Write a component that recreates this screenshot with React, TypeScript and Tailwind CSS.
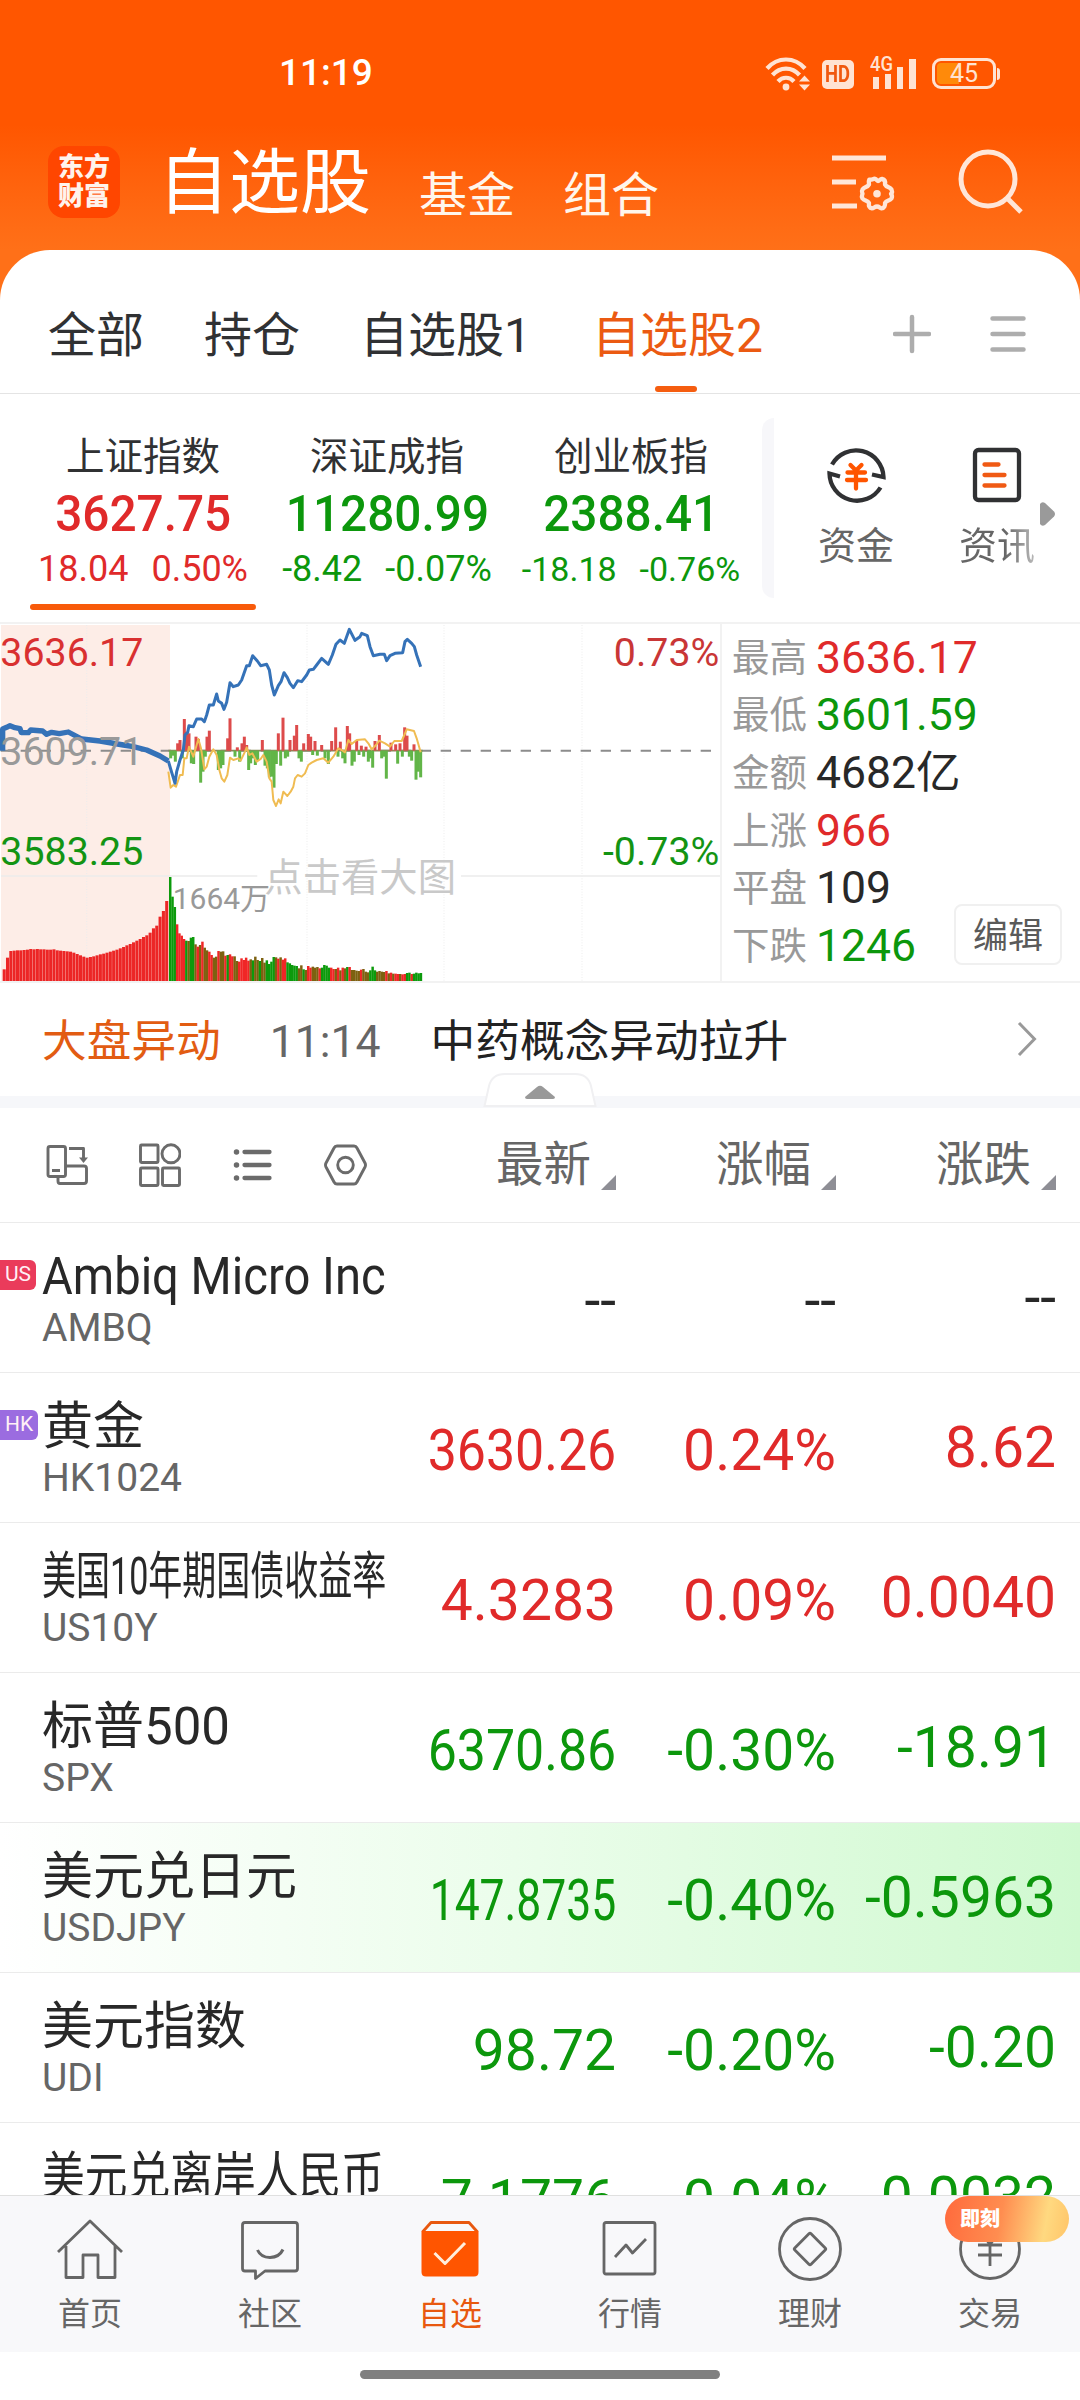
import type { ReactNode } from "react";

interface IndexItem {
  name: string;
  value: string;
  change: string;
  percent: string;
  tone: string;
  size: string;
  active?: boolean;
}

interface Quote {
  name: string;
  code?: string;
  last: string;
  percent: string;
  change: string;
  tone: string;
  market?: string;
  marketBg?: string;
  nameFit?: string;
  lastFit?: string;
  rowBg?: string;
}

const RED = "text-[#e02a2a]";
const GREEN = "text-[#0c970c]";
const INK = "text-[#282828]";

const INDEXES: IndexItem[] = [
  { name: "上证指数", value: "3627.75", change: "18.04", percent: "0.50%", tone: RED, size: "text-[36px] gap-[23px]", active: true },
  { name: "深证成指", value: "11280.99", change: "-8.42", percent: "-0.07%", tone: GREEN, size: "text-[36px] gap-[23px]" },
  { name: "创业板指", value: "2388.41", change: "-18.18", percent: "-0.76%", tone: GREEN, size: "text-[34px] gap-[23px]" },
];

const STATS = [
  { label: "最高", value: "3636.17", tone: RED },
  { label: "最低", value: "3601.59", tone: GREEN },
  { label: "金额", value: "4682亿", tone: INK },
  { label: "上涨", value: "966", tone: RED },
  { label: "平盘", value: "109", tone: INK },
  { label: "下跌", value: "1246", tone: GREEN },
];

const QUOTES: Quote[] = [
  { name: "Ambiq Micro Inc", code: "AMBQ", last: "--", percent: "--", change: "--", tone: INK, market: "US", marketBg: "w-[36px] bg-[#ea3b5b]", nameFit: "scale-x-[0.925]" },
  { name: "黄金", code: "HK1024", last: "3630.26", percent: "0.24%", change: "8.62", tone: RED, market: "HK", marketBg: "w-[38px] bg-[#9b6ce0]", lastFit: "scale-x-[0.91]" },
  { name: "美国10年期国债收益率", code: "US10Y", last: "4.3283", percent: "0.09%", change: "0.0040", tone: RED, nameFit: "scale-x-[0.667]" },
  { name: "标普500", code: "SPX", last: "6370.86", percent: "-0.30%", change: "-18.91", tone: GREEN, lastFit: "scale-x-[0.91]" },
  { name: "美元兑日元", code: "USDJPY", last: "147.8735", percent: "-0.40%", change: "-0.5963", tone: GREEN, lastFit: "scale-x-[0.78]", rowBg: "bg-linear-to-r from-white via-[#eafdea] to-[#d0f9d0]" },
  { name: "美元指数", code: "UDI", last: "98.72", percent: "-0.20%", change: "-0.20", tone: GREEN },
  { name: "美元兑离岸人民币", last: "7.1776", percent: "0.04%", change: "0.0032", tone: GREEN, nameFit: "scale-x-[0.838]" },
];

// Chart data, in viewBox units (three per pixel).
const PRE_LINE =
  "8,407 8,342 20,337 30,332 45,338 60,341 64,353 85,353 92,345 128,348 140,358 155,352 178,356 205,351 222,360 245,372 300,378 335,384 370,390 400,395 440,405 480,423 505,438";
const PRICE_LINE =
  "505,438 512,462 518,482 525,505 530,470 540,435 550,405 555,360 563,352 567,332 580,335 590,312 605,312 613,320 620,300 628,270 640,270 650,237 655,258 665,265 672,283 680,262 690,203 700,215 715,210 725,195 740,152 748,152 758,122 772,138 782,152 800,148 808,165 815,210 823,240 835,212 843,200 852,173 862,188 870,205 880,218 893,197 905,200 920,180 928,165 940,163 950,150 965,130 985,148 997,120 1008,88 1020,75 1033,85 1048,43 1065,76 1080,65 1085,55 1102,62 1110,95 1120,122 1140,118 1153,118 1160,137 1170,122 1185,115 1208,113 1215,80 1222,73 1235,85 1243,95 1250,120 1262,155";
const FLOW_LINE =
  "505,470 512,518 520,510 528,515 540,480 548,480 553,430 560,430 567,395 580,425 595,372 603,400 613,463 620,455 628,425 640,403 650,420 658,465 665,490 673,500 682,480 690,428 700,435 715,430 722,437 735,410 740,397 748,420 757,415 770,440 782,432 790,420 800,440 808,490 815,500 820,555 828,573 836,553 842,565 850,530 862,543 872,530 880,515 885,490 893,480 905,485 915,475 925,450 935,443 950,435 970,430 985,443 1000,425 1015,400 1025,405 1035,412 1045,375 1055,387 1070,375 1095,373 1105,385 1115,403 1128,390 1138,377 1155,385 1170,395 1183,378 1205,378 1213,360 1220,343 1242,348 1250,370 1262,412";

const FLOW_BARS = [
  [512, 430], [519, 422], [526, 440], [533, 385], [540, 375], [547, 430], [553, 312], [560, 350], [567, 355], [574, 445],
  [581, 447], [588, 365], [595, 372], [602, 503], [609, 470], [616, 425], [621, 365], [628, 347], [655, 465], [662, 460],
  [669, 450], [683, 370], [690, 310], [705, 425], [712, 397], [719, 440], [726, 385], [733, 365], [740, 390], [746, 465],
  [752, 445], [759, 430], [766, 450], [773, 435], [787, 375], [795, 452], [802, 460], [808, 487], [815, 485], [822, 518],
  [829, 447], [835, 355], [842, 452], [849, 308], [856, 430], [863, 425], [870, 375], [883, 362], [890, 330], [897, 430],
  [904, 440], [911, 385], [925, 357], [932, 365], [938, 420], [945, 378], [952, 422], [965, 390], [975, 430], [985, 447],
  [995, 378], [1007, 337], [1014, 425], [1021, 380], [1028, 430], [1035, 445], [1042, 333], [1049, 355], [1056, 452],
  [1063, 440], [1070, 375], [1077, 420], [1084, 392], [1091, 425], [1098, 395], [1105, 440], [1111, 430], [1118, 458],
  [1125, 378], [1138, 360], [1145, 430], [1152, 425], [1159, 491], [1173, 383], [1187, 388], [1193, 446], [1200, 385],
  [1207, 425], [1214, 337], [1221, 362], [1228, 425], [1235, 437], [1242, 388], [1248, 494], [1255, 470], [1262, 487],
];

const AUCTION_TOPS = [
  1063, 1028, 1008, 1007, 1006, 1006, 1005, 1004, 1002, 1003, 1002, 1003, 1003, 1004, 1004, 1003, 1006, 1007, 1008, 1009,
  1010, 1013, 1017, 1021, 1025, 1028, 1026, 1024, 1021, 1018, 1016, 1013, 1010, 1007, 1004, 1000, 996, 991, 987, 982, 977,
  972, 966, 961, 953, 940, 932, 905, 888, 858,
];

const VOLUME_TOPS = [
  786, 845, 876, 928, 955, 962, 972, 977, 978, 968, 966, 988, 995, 990, 980, 998, 1006, 1010, 1020, 1028, 1025, 1008, 1010,
  1009, 1022, 1020, 1018, 1024, 1024, 1038, 1040, 1030, 1035, 1028, 1037, 1033, 1036, 1025, 1035, 1038, 1029, 1043, 1036,
  1047, 1040, 1026, 1027, 1031, 1027, 1034, 1030, 1042, 1045, 1050, 1052, 1053, 1060, 1051, 1063, 1065, 1053, 1058, 1055,
  1058, 1056, 1060, 1058, 1050, 1052, 1058, 1058, 1062, 1062, 1058, 1066, 1058, 1060, 1056, 1056, 1065, 1065, 1067, 1068,
  1064, 1062, 1070, 1072, 1066, 1055, 1066, 1070, 1068, 1070, 1071, 1068, 1075, 1073, 1076, 1076, 1077, 1077, 1078, 1077,
  1074, 1073, 1077, 1076, 1073, 1075, 1074,
];
const VOLUME_TONES =
  "gggrrrrgmggmrmrmmrrmmrmmrgrrmmrrrrrmgmmgmmggggmrmrrgggggmmgmrrmmmrggggrrmrmrmgrmmmmrmmmgggmmmmrmrmrrmrrggrggg";
const TONE_FILL: Record<string, string> = { g: "#0c9a0c", r: "#f02626", m: "#7d6110" };

const BOTTOM = 1098;

function MinuteChart() {
  return (
    <svg width="720" height="357" viewBox="0 27 2160 1071" className="block shrink-0">
      <rect x="3" y="30" width="507" height="1068" fill="#fdede7" />
      {[260, 921, 1332, 1746].map((x) => (
        <line key={x} x1={x} x2={x} y1="30" y2={BOTTOM} stroke="#ededed" strokeWidth="3" strokeDasharray="3 5" />
      ))}
      <path d="M3 783H772M1383 783H2160" stroke="#ececec" strokeWidth="5" />
      <path d="M2 407H2134" stroke="#8c8c8c" strokeWidth="6" strokeDasharray="31 29" />
      {AUCTION_TOPS.map((top, i) => (
        <rect key={i} x={8 + i * 9.95} y={top} width="9.2" height={BOTTOM - top} fill="#ec2626" />
      ))}
      {VOLUME_TOPS.map((top, i) => (
        <rect key={i} x={507 + i * 6.9} y={top} width="7.4" height={BOTTOM - top} fill={TONE_FILL[VOLUME_TONES[i] ?? "g"]} />
      ))}
      <path d="M505 407H1268" stroke="#8a8a5a" strokeWidth="5" />
      {FLOW_BARS.map(([x, y]) => (
        <rect key={x} x={x - 4.5} y={Math.min(y, 407)} width="9" height={Math.abs(y - 407)} fill={y < 407 ? "#dd4b4b" : "#62b548"} />
      ))}
      <polyline points={FLOW_LINE} fill="none" stroke="#f0bc52" strokeWidth="6" strokeLinejoin="round" />
      <polyline points={PRE_LINE} fill="none" stroke="#3572b8" strokeWidth="16" strokeLinejoin="round" />
      <polyline points={PRICE_LINE} fill="none" stroke="#3572b8" strokeWidth="9" strokeLinejoin="round" />
      <g fontSize="118">
        <text x="1" y="153" fill="#d93030">3636.17</text>
        <text x="1" y="449" fill="#999999">3609.71</text>
        <text x="1" y="749" fill="#139413">3583.25</text>
        <text x="2158" y="153" fill="#c93636" textAnchor="end">0.73%</text>
        <text x="2158" y="749" fill="#139413" textAnchor="end">-0.73%</text>
      </g>
      <text x="518" y="882" fontSize="90" fill="#999999">1664万</text>
      <text x="793" y="827" fontSize="115" fill="#c9c9c9">点击看大图</text>
    </svg>
  );
}

function StatusIcons() {
  return (
    <div className="flex items-end text-[#ffe3d3]">
      <svg width="46" height="36" viewBox="0 0 46 36" fill="none" stroke="currentColor" strokeWidth="4.2">
        <path d="M2 13.5C12.500 1.500 29.500 1.500 40 13.500" />
        <path d="M7.500 20C15 11.500 27 11.500 34.500 20" />
        <path d="M13 26.500C17.500 21.500 24.500 21.500 29 26.500" />
        <circle cx="21" cy="32" r="3.4" fill="currentColor" stroke="none" />
        <path d="M34 26.500l5.500-6 5.500 6zM34 29.500l5.500 6 5.500-6z" fill="currentColor" stroke="none" />
      </svg>
      <div className="ml-[11px] mb-[2px] flex h-[29px] w-[32px] items-center justify-center rounded-[5px] bg-[#ffe3d3] text-[23px] leading-none font-bold text-[#f0580f]">
        <span className="scale-x-[0.8]">HD</span>
      </div>
      <svg width="48" height="42" viewBox="0 -8 48 42" className="ml-[16px] mb-[2px]" fill="currentColor">
        <text x="0" y="15.500" fontSize="21" fontWeight="500" textLength="23" lengthAdjust="spacingAndGlyphs">4G</text>
        <path d="M3 22h6v12H3zM15 19h6v15h-6zM27 12h6v22h-6zM39 4h7v30h-7z" />
      </svg>
      <div className="ml-[14px] mb-[2px] flex items-center">
        <div className="flex h-[31px] w-[64px] items-center justify-center rounded-[9px] border-[3px] border-current bg-linear-to-r from-[#ff8a0a] from-[24px] to-transparent to-[24px] bg-clip-content p-[2px] text-[25px] leading-none">
          45
        </div>
        <div className="ml-px h-[12px] w-[3px] rounded-r bg-current" />
      </div>
    </div>
  );
}

function Header() {
  return (
    <header className="h-[250px] shrink-0 text-white">
      <div className="flex h-[130px] items-start justify-between pt-[53px] pr-[80px] pl-[279px]">
        <div className="text-[37px] leading-[40px] font-medium">11:19</div>
        <div className="-mt-[6px]">
          <StatusIcons />
        </div>
      </div>
      <div className="flex h-[104px] items-center pl-[48px]">
        <div className="flex size-[72px] flex-col items-center justify-center rounded-[16px] bg-[#ff4600] text-[26px] leading-[29px] font-black text-[#fff3ec]">
          <span>东方</span>
          <span>财富</span>
        </div>
        <h1 className="mt-[2px] ml-[38px] text-[71px] leading-[80px]">自选股</h1>
        <div className="mt-[27px] ml-[48px] flex gap-[48px] text-[48px] leading-[60px] text-[#fff6ec]">
          <span>基金</span>
          <span>组合</span>
        </div>
        <svg width="66" height="64" viewBox="0 0 66 64" className="ml-[172px]" fill="none" stroke="#ffe6d8" strokeWidth="5">
          <path d="M1 8H55M1 32H25M1 56H26" />
          <path
            d="M38.300 29.600C41.500 30 42 28.500 44 28.800C46 29.500 45.500 31 47 31C48.500 31 49 29 51 28.800C54 29.500 54.500 32 54 34.500C55.500 37.500 58.500 36.500 60.500 39.500C62 43 60 43.700 60 43.700C60 44.700 62 45 60.500 48.500C58.500 51 55.500 50 54 53C54.500 55.500 53 58.500 50.500 58.300C48.500 58 48.500 56.500 46 56.500C43.500 56.500 43 58.300 41 58.300C38.500 58 37.500 56 38 53C36.500 50 33.500 51 31.500 48.500C30 45.500 31.500 44.800 31.500 43.700C31.500 42.700 30 42 31.500 39.500C33.500 36.500 36.500 37.500 38 34.500C37.800 32.500 37.500 31 38.300 29.600Z"
            strokeWidth="4.300"
            strokeLinejoin="round"
          />
          <circle cx="46" cy="43.700" r="3.800" fill="#ffe6d8" stroke="none" />
        </svg>
        <svg width="66" height="66" viewBox="0 0 66 66" className="ml-[61px]" fill="none" stroke="#ffe6d8" strokeWidth="5">
          <circle cx="30" cy="30" r="27" />
          <path d="M49 49L63 63" />
        </svg>
      </div>
    </header>
  );
}

function Tabs() {
  return (
    <div className="flex h-[144px] shrink-0 items-center border-b border-[#e4e4e4] pt-[29px] pl-[48px] text-[48px] leading-[60px] text-[#303133]">
      <span>全部</span>
      <span className="ml-[60px]">持仓</span>
      <span className="ml-[60px]">自选股1</span>
      <span className="relative ml-[61px] text-[#eb5a12]">
        自选股2
        <i className="absolute top-[80px] left-[63px] h-[6px] w-[42px] rounded-full bg-[#f55d10]" />
      </span>
      <svg width="38" height="40" viewBox="0 0 38 40" className="-mt-[5px] ml-[130px]" stroke="#adadad" strokeWidth="4.500" strokeLinecap="round">
        <path d="M19 3V37M2 20H36" />
      </svg>
      <svg width="36" height="40" viewBox="0 0 36 40" className="-mt-[5px] ml-[59px]" stroke="#adadad" strokeWidth="4.500" strokeLinecap="round">
        <path d="M2.500 4.500H33.500M2.500 20H33.500M2.500 35.500H33.500" />
      </svg>
    </div>
  );
}

function IndexStrip() {
  return (
    <section className="flex h-[228px] shrink-0 items-start pl-[21px]">
      {INDEXES.map((item) => (
        <div key={item.name} className="flex w-[244px] flex-col items-center pt-[37px] whitespace-nowrap">
          <div className="text-[38.500px] leading-[52px] text-[#303133]">{item.name}</div>
          <div className={`mt-[5px] scale-x-[0.955] text-[50px] leading-[52px] font-medium ${item.tone}`}>{item.value}</div>
          <div className={`mt-[7px] flex leading-[44px] ${item.size} ${item.tone}`}>
            <span>{item.change}</span>
            <span>{item.percent}</span>
          </div>
          {item.active && <div className="mt-[13px] h-[6px] w-[226px] rounded-full bg-[#f85a0a]" />}
        </div>
      ))}
      <div className="mt-[24px] ml-[9px] h-[180px] w-[12px] rounded-l-[12px] bg-[#f7f7fa]" />
      <div className="mt-[50px] ml-[44px] flex flex-col items-center">
        <svg width="62" height="62" viewBox="0 0 62 62" fill="none" stroke="#303133" strokeWidth="4.300">
          <path d="M7 20.500A27.500 27.500 0 0 1 58.500 33L47 30.500" />
          <path d="M55.500 43.500A27.500 27.500 0 0 1 4.500 29.500L15 32.500" />
          <path d="M25.500 21L31 26.500L36.500 21M22.500 28.500H40M22 36H41M31 27V44.500" stroke="#ff5500" strokeLinecap="round" />
        </svg>
        <span className="mt-[15px] text-[38px] leading-[50px] text-[#666]">资金</span>
      </div>
      <div className="mt-[50px] ml-[65px] flex flex-col items-center">
        <svg width="62" height="62" viewBox="0 0 62 62" fill="none" stroke="#303133" strokeWidth="4.300">
          <rect x="9" y="6" width="44" height="50" rx="3.500" />
          <path d="M18.500 20.500H32.500M18.500 31H38.500M18.500 41.500H38.500" stroke="#f05a14" strokeLinecap="round" />
        </svg>
        <span className="mt-[15px] bg-linear-to-r from-[#666] from-60% to-[#bbb] bg-clip-text text-[38px] leading-[50px] text-transparent">
          资讯
        </span>
      </div>
      <svg width="16" height="26" viewBox="0 0 16 26" className="mt-[107px] ml-[5px]" fill="#9a9a9a">
        <path d="M0 3Q2 0 5 2L14 10.500Q16 13 14 15.500L5 24Q2 26 0 23Z" />
      </svg>
    </section>
  );
}

function Overview() {
  return (
    <section className="flex h-[361px] shrink-0 border-y-2 border-[#f2f2f2]">
      <MinuteChart />
      <div className="flex flex-1 border-l-2 border-[#f2f2f2] pt-[5px] pl-[10px]">
        <div className="w-[222px]">
          {STATS.map((s) => (
            <div key={s.label} className="flex h-[57.600px] items-center gap-[9px] whitespace-nowrap">
              <span className="text-[37.500px] leading-[50px] text-[#999]">{s.label}</span>
              <span className={`text-[44.500px] leading-[50px] ${s.tone}`}>{s.value}</span>
            </div>
          ))}
        </div>
        <div className="mb-[16px] flex h-[61px] w-[108px] items-center justify-center self-end rounded-[8px] border-2 border-[#f0f0f0] pt-[3px] text-[35px] leading-none text-[#5a5a5a]">
          编辑
        </div>
      </div>
    </section>
  );
}

function NewsRow() {
  return (
    <section className="relative flex h-[125px] shrink-0 items-start border-b-[12px] border-[#f6f7fa] pt-[29px] pl-[42px] text-[44.700px] leading-[60px]">
      <span className="text-[#e25c12]">大盘异动</span>
      <span className="ml-[49px] text-[44.500px] text-[#666]">11:14</span>
      <span className="ml-[50px] text-[#222]">中药概念异动拉升</span>
      <svg width="20" height="36" viewBox="0 0 20 36" className="mt-[9px] ml-[229px]" fill="none" stroke="#999" strokeWidth="3">
        <path d="M2 2L17.500 18L2 34" />
      </svg>
      <svg width="114" height="36" viewBox="0 0 114 36" className="absolute top-[89px] left-[483px]">
        <path d="M1.500 34L6 14Q9 2 22 2H92Q105 2 108 14L112.500 34Z" fill="#fff" stroke="#f0f0f2" strokeWidth="2" />
        <path d="M42 25L54 15Q57 12.500 60 15L72 25Q72 27 70 27H44Q42 27 42 25Z" fill="#999" />
      </svg>
    </section>
  );
}

function SortHead({ label, width }: { label: string; width: string }) {
  return (
    <div className={`flex items-end justify-end ${width}`}>
      <span className="text-[47.500px] leading-[60px]">{label}</span>
      <svg width="15" height="15" viewBox="0 0 15 15" className="mb-[5px] ml-[10px]" fill="#8e8e95">
        <path d="M15 0V15H0Z" />
      </svg>
    </div>
  );
}

function TableHead() {
  return (
    <div className="flex h-[115px] shrink-0 items-center border-b border-[#ebebeb] pl-[46px] text-[#666]">
      <div className="flex items-center">
        <svg width="42" height="42" viewBox="0 0 42 42" fill="none" stroke="#6b6b6b" strokeWidth="2.900" strokeLinejoin="round">
          <rect x="2" y="2.500" width="17.500" height="30" rx="2" />
          <path d="M6 26.500H14M20 22H38Q40.500 22 40.500 24.500V37Q40.500 39.500 38 39.500H14Q12 39.500 12 37V33M23 4.500H37.500V16" />
          <path d="M33 13.500H42L37.500 19Z" fill="#6b6b6b" stroke="none" />
        </svg>
        <svg width="42" height="44" viewBox="0 0 42 44" className="ml-[51px]" fill="none" stroke="#6b6b6b" strokeWidth="2.900">
          <rect x="1.500" y="2" width="17.500" height="17.500" rx="1" />
          <circle cx="32" cy="10.800" r="9" />
          <rect x="1.500" y="25" width="17.500" height="17.500" rx="1" />
          <rect x="23.500" y="25" width="17" height="17.500" rx="1" />
        </svg>
        <svg width="40" height="34" viewBox="0 0 40 34" className="ml-[52px]" stroke="#6b6b6b" strokeWidth="4.300" strokeLinecap="round">
          <path d="M11.500 4H36.500M11.500 17H36.500M11.500 30H36.500" />
          <path d="M3.500 4h.01M3.500 17h.01M3.500 30h.01" strokeWidth="5.500" />
        </svg>
        <svg width="43" height="42" viewBox="0 0 43 42" className="ml-[51px]" fill="none" stroke="#6b6b6b" strokeWidth="2.900" strokeLinejoin="round">
          <path d="M13 2H30Q32 2 33 4L41 19Q42 21 41 23L33 38Q32 40 30 40H13Q11 40 10 38L2 23Q1 21 2 19L10 4Q11 2 13 2Z" />
          <circle cx="21.500" cy="21" r="7.800" />
        </svg>
      </div>
      <SortHead label="最新" width="w-[249px]" />
      <SortHead label="涨幅" width="w-[220px]" />
      <SortHead label="涨跌" width="w-[220px]" />
    </div>
  );
}

function QuoteRow({ q }: { q: Quote }) {
  return (
    <div className={`relative flex h-[150px] shrink-0 border-b border-[#ebebeb] pl-[42px] whitespace-nowrap ${q.rowBg ?? ""}`}>
      {q.market && (
        <span className={`absolute top-[37px] left-0 flex h-[30px] items-center justify-center rounded-r-[6px] text-[21px] text-[#fff0f5] ${q.marketBg}`}>
          {q.market}
        </span>
      )}
      <div className="w-[354px] pt-[24px]">
        <div className="text-[51px] leading-[60px] text-[#282828]">
          <span className={`inline-block origin-left ${q.nameFit ?? ""}`}>{q.name}</span>
        </div>
        {q.code && <div className="text-[39px] leading-[42px] text-[#666]">{q.code}</div>}
      </div>
      <div className={`flex text-[57px] leading-[64px] ${q.tone}`}>
        <div className="flex w-[220px] justify-end pt-[46px]">
          <span className={`origin-right ${q.lastFit ?? ""}`}>{q.last}</span>
        </div>
        <div className="w-[220px] pt-[46px] text-right">{q.percent}</div>
        <div className="w-[220px] pt-[43px] text-right">{q.change}</div>
      </div>
    </div>
  );
}

const NAV: { label: string; icon: ReactNode }[] = [
  { label: "首页", icon: <path d="M3 35L35 4L67 35M11 29V60.500H28V38H43V60.500H60V29" /> },
  {
    label: "社区",
    icon: (
      <>
        <path d="M10 5.500H60Q62.500 5.500 62.500 8V51.500Q62.500 54 60 54H30L20.500 61.500V54H10Q7.500 54 7.500 51.500V8Q7.500 5.500 10 5.500Z" />
        <path d="M22.500 33C27 43 43 43 48 32.500" strokeWidth="3" />
      </>
    ),
  },
  {
    label: "自选",
    icon: (
      <>
        <path d="M7.500 15L16 5.500H54L62.500 15" fill="none" />
        <path d="M6.500 14H63.500V55Q63.500 59.500 59 59.500H11Q6.500 59.500 6.500 55Z" fill="#ff5500" stroke="none" />
        <path d="M19.500 36L30 46.500L50 26" stroke="#ffeedd" strokeWidth="3" />
      </>
    ),
  },
  {
    label: "行情",
    icon: (
      <>
        <rect x="9" y="5.500" width="51" height="51.500" rx="2" />
        <path d="M20 40L31 28L37.500 36L51 22" />
      </>
    ),
  },
  {
    label: "理财",
    icon: (
      <>
        <circle cx="35" cy="32" r="30.500" />
        <rect x="23.500" y="20.500" width="23" height="23" rx="1.500" transform="rotate(45 35 32)" />
      </>
    ),
  },
  {
    label: "交易",
    icon: (
      <>
        <circle cx="35" cy="32" r="29.500" />
        <path d="M27 17L35 27.500L43 17M23 28H47M23 38H47M35 27V49" />
      </>
    ),
  },
];

function BottomNav() {
  return (
    <nav className="flex h-[157px] shrink-0 border-t border-[#e0e0e0] bg-[#f8f8fa]">
      {NAV.map((item) => {
        const active = item.label === "自选";
        return (
          <div key={item.label} className={`relative flex w-[180px] flex-col items-center pt-[21px] ${active ? "text-[#e8580f]" : "text-[#666]"}`}>
            <svg width="70" height="66" viewBox="0 0 70 66" fill="none" stroke="currentColor" strokeWidth="2.800" strokeLinejoin="round">
              {item.icon}
            </svg>
            <span className="mt-[10px] text-[32px] leading-[42px]">{item.label}</span>
            {item.label === "交易" && (
              <div className="absolute top-0 left-[45px] flex h-[46px] w-[124px] items-center rounded-full bg-linear-[100deg,#ff6a3c,#ff8d50_45%,#ffd980_80%,#ffc468] pl-[15px] text-[20px] leading-none font-black text-white">
                即刻
              </div>
            )}
          </div>
        );
      })}
    </nav>
  );
}

function App() {
  return (
    <div className="flex h-[2400px] w-[1080px] flex-col overflow-hidden bg-white bg-linear-to-b from-[#ff5600] from-[125px] to-[#ff7018] to-[250px] font-['Roboto','Noto_Sans_CJK_SC',sans-serif]">
      <Header />
      <main className="flex h-[1945px] shrink-0 flex-col overflow-hidden rounded-t-[50px] bg-white">
        <Tabs />
        <IndexStrip />
        <Overview />
        <NewsRow />
        <TableHead />
        {QUOTES.map((q) => (
          <QuoteRow key={q.name} q={q} />
        ))}
      </main>
      <BottomNav />
      <div className="flex flex-1 justify-center bg-white pt-[18px]">
        <div className="h-[9px] w-[360px] rounded-full bg-[#808080]" />
      </div>
    </div>
  );
}

export default App;
